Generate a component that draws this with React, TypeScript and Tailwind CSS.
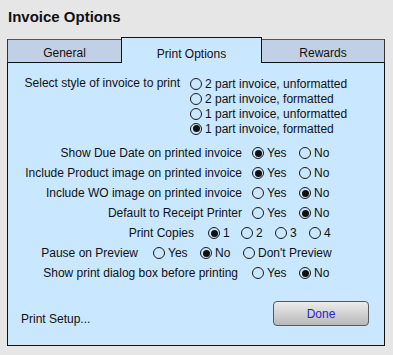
import React from 'react';

type Opt = { label: string; checked?: boolean; w?: string };

const Radio = ({ label, checked, w }: Opt) => {
  return (
    <div className={`flex items-center shrink-0 ${w ?? ''}`}>
      <span className="w-[12px] h-[12px] rounded-full border border-[#1a1a1a] flex items-center justify-center shrink-0">
        {checked && <span className="w-[7px] h-[7px] rounded-full bg-[#111]" />}
      </span>
      <span className="ml-[3px] whitespace-nowrap">{label}</span>
    </div>
  );
};

const Row = ({ label, lw, gap, opts }: { label: string; lw: string; gap: string; opts: Opt[] }) => {
  return (
    <div className="flex items-center h-[20px]">
      <div className={`${lw} text-right whitespace-nowrap shrink-0`}>{label}</div>
      <div className={`flex items-center ${gap}`}>
        {opts.map((o) => (
          <Radio key={o.label} {...o} />
        ))}
      </div>
    </div>
  );
};

const App = () => {
  return (
    <div className="w-[393px] h-[355px] bg-[#e6e6e6] font-['Liberation_Sans',Arial,sans-serif] text-[12px] text-[#111] overflow-hidden">
      <div className="pl-[8px] pt-[8px] h-[37px] text-[15px] font-bold leading-[18px]">Invoice Options</div>

      <div className="ml-[7px] w-[378px]">
        {/* tabs */}
        <div className="flex items-end h-[26px]">
          <div className="w-[114px] h-[24px] border-t border-l border-b border-t-[#555] border-l-[#333] border-b-[#111] bg-[#c1d0e4] flex items-center justify-center pt-[3px]">
            General
          </div>
          <div className="w-[141px] h-[26px] border-t border-l border-r border-[#111] bg-[#c9e7ff] flex items-center justify-center pt-[6px]">
            Print Options
          </div>
          <div className="w-[123px] h-[24px] border-t border-r border-b border-t-[#555] border-r-[#333] border-b-[#111] bg-[#c1d0e4] flex items-center justify-center pt-[3px]">
            Rewards
          </div>
        </div>

        {/* panel */}
        <div className="bg-[#c9e7ff] border-l border-r border-b border-[#111] pt-[13px] pb-[19px]">
          <div className="flex items-start">
            <div className="w-[172px] text-right leading-[15px] shrink-0">Select style of invoice to print</div>
            <div className="ml-[10px] flex flex-col">
              <div className="h-[15px] flex items-center"><Radio label="2 part invoice, unformatted" /></div>
              <div className="h-[15px] flex items-center"><Radio label="2 part invoice, formatted" /></div>
              <div className="h-[15px] flex items-center"><Radio label="1 part invoice, unformatted" /></div>
              <div className="h-[15px] flex items-center"><Radio label="1 part invoice, formatted" checked /></div>
            </div>
          </div>

          <div className="mt-[7px]">
            <Row
              label="Show Due Date on printed invoice"
              lw="w-[234px]"
              gap="ml-[10px]"
              opts={[{ label: 'Yes', checked: true, w: 'w-[47px]' }, { label: 'No' }]}
            />
            <Row
              label="Include Product image on printed invoice"
              lw="w-[234px]"
              gap="ml-[10px]"
              opts={[{ label: 'Yes', checked: true, w: 'w-[47px]' }, { label: 'No' }]}
            />
            <Row
              label="Include WO image on printed invoice"
              lw="w-[234px]"
              gap="ml-[10px]"
              opts={[{ label: 'Yes', w: 'w-[47px]' }, { label: 'No', checked: true }]}
            />
            <Row
              label="Default to Receipt Printer"
              lw="w-[234px]"
              gap="ml-[10px]"
              opts={[{ label: 'Yes', w: 'w-[47px]' }, { label: 'No', checked: true }]}
            />
            <Row
              label="Print Copies"
              lw="w-[186px]"
              gap="ml-[14px]"
              opts={[
                { label: '1', checked: true, w: 'w-[33px]' },
                { label: '2', w: 'w-[34px]' },
                { label: '3', w: 'w-[34px]' },
                { label: '4' },
              ]}
            />
            <Row
              label="Pause on Preview"
              lw="w-[130px]"
              gap="ml-[15px]"
              opts={[
                { label: 'Yes', w: 'w-[47px]' },
                { label: 'No', checked: true, w: 'w-[43px]' },
                { label: "Don't Preview" },
              ]}
            />
            <Row
              label="Show print dialog box before printing"
              lw="w-[230px]"
              gap="ml-[14px]"
              opts={[{ label: 'Yes', w: 'w-[47px]' }, { label: 'No', checked: true }]}
            />
          </div>

          <div className="mt-[18px] flex items-end justify-between pl-[13px] pr-[15px]">
            <div className="leading-[15px] mb-[-1px]">Print Setup...</div>
            <button className="w-[96px] h-[25px] rounded-[4px] border border-[#5a5a5a] bg-gradient-to-b from-[#ececec] to-[#b9b9b9] text-[#2a1fc8] text-[12px]">
              Done
            </button>
          </div>
        </div>
      </div>
    </div>
  );
};

export default App;
